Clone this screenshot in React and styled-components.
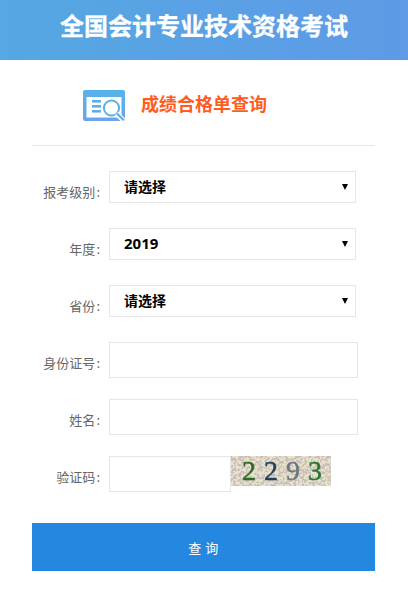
import React, { useState } from 'react';
import styled, { createGlobalStyle } from 'styled-components';

const GlobalStyle = createGlobalStyle`
  html, body {
    margin: 0;
    padding: 0;
    background: #fff;
    font-family: "Open Sans", "Noto Sans CJK SC", sans-serif;
  }
`;

const captchaDigits = [
  { value: '2', color: '#2a6a28' },
  { value: '2', color: '#1f3d5f' },
  { value: '9', color: '#6a777e' },
  { value: '3', color: '#23782f' },
];

function App() {
  const [code, setCode] = useState('');

  return (
    <Page>
      <GlobalStyle />
      <Header>全国会计专业技术资格考试</Header>
      <Main>
        <TitleRow>
          <QueryIcon />
          <TitleText>成绩合格单查询</TitleText>
        </TitleRow>
        <Form onSubmit={(e) => e.preventDefault()}>
          <SelectRow>
            <Label>报考级别</Label>
            <SelectWrap>
              <Select defaultValue="">
                <option value="">请选择</option>
                <option value="1">初级资格</option>
                <option value="2">中级资格</option>
              </Select>
            </SelectWrap>
          </SelectRow>
          <SelectRow>
            <Label>年度</Label>
            <SelectWrap>
              <Select defaultValue="2019" $size={15}>
                <option value="2019">2019</option>
                <option value="2018">2018</option>
              </Select>
            </SelectWrap>
          </SelectRow>
          <SelectRow>
            <Label>省份</Label>
            <SelectWrap>
              <Select defaultValue="">
                <option value="">请选择</option>
                <option value="bj">北京</option>
              </Select>
            </SelectWrap>
          </SelectRow>
          <InputRow>
            <Label>身份证号</Label>
            <Input />
          </InputRow>
          <InputRow>
            <Label>姓名</Label>
            <Input />
          </InputRow>
          <CaptchaRow>
            <Label>验证码</Label>
            <CaptchaInput value={code} onChange={(e) => setCode(e.target.value)} />
            <Captcha>
              <CaptchaNoise />
              {captchaDigits.map((d, i) => (
                <Digit key={i} $color={d.color}>{d.value}</Digit>
              ))}
            </Captcha>
          </CaptchaRow>
          <SubmitButton type="submit">查 询</SubmitButton>
        </Form>
      </Main>
    </Page>
  );
}

export default App;

function QueryIcon() {
  return (
    <IconSvg viewBox="0 0 42 32">
      <defs>
        <linearGradient id="iconFill" x1="0" y1="0" x2="0" y2="1">
          <stop offset="0" stopColor="#55b4ec" />
          <stop offset="1" stopColor="#6ba4ea" />
        </linearGradient>
      </defs>
      <rect x="0" y="0" width="42" height="31" rx="2" fill="url(#iconFill)" />
      <rect x="3.5" y="7" width="35" height="20.5" fill="#fff" />
      <rect x="9" y="10" width="9" height="2.6" fill="#5aaeea" />
      <rect x="9" y="15" width="9" height="2.6" fill="#5aaeea" />
      <rect x="9" y="20" width="9" height="2.6" fill="#5aaeea" />
      <circle cx="28.5" cy="18" r="7.6" fill="#fff" stroke="#5aaeea" strokeWidth="2" />
      <path d="M33.5 23.5 L40.5 30.5" stroke="#fff" strokeWidth="5" />
      <path d="M34 23.5 L40.5 30" stroke="#5aaeea" strokeWidth="2.2" />
    </IconSvg>
  );
}

function CaptchaNoise() {
  return (
    <NoiseSvg width="100" height="30">
      <filter id="captchaNoise">
        <feTurbulence type="fractalNoise" baseFrequency="0.38" numOctaves="3" seed="11" />
        <feColorMatrix
          type="matrix"
          values="0 0 0 0 0.58  0 0 0 0 0.50  0 0 0 0 0.50  6 0 0 0 -2.6"
        />
      </filter>
      <rect width="100" height="30" fill="#e9e4c8" />
      <rect width="100" height="30" filter="url(#captchaNoise)" />
    </NoiseSvg>
  );
}

const Page = styled.div`
  width: 408px;
  min-height: 593px;
  background: #fff;
`;

const Header = styled.h1`
  margin: 0;
  height: 60px;
  display: flex;
  align-items: center;
  justify-content: center;
  background: linear-gradient(90deg, #55a8e3, #5e9ae6);
  color: #fff;
  font-family: "Noto Sans CJK SC", sans-serif;
  font-size: 24px;
  font-weight: 700;
  -webkit-text-stroke: 0.3px #fff;
  padding-bottom: 11px;
  box-sizing: border-box;
`;

const Main = styled.main`
  margin: 0 33px 0 32px;
`;

const TitleRow = styled.div`
  height: 86px;
  box-sizing: border-box;
  display: flex;
  align-items: center;
  padding: 7px 0 0 51px;
  border-bottom: 1px solid #e6e6e6;
`;

const IconSvg = styled.svg`
  width: 42px;
  height: 32px;
  flex: none;
`;

const TitleText = styled.h2`
  margin: 0 0 7px 16px;
  color: #ff5c22;
  font-family: "Noto Sans CJK SC", sans-serif;
  font-size: 18px;
  font-weight: 700;
`;

const Form = styled.form`
  display: flex;
  flex-direction: column;
  padding-top: 25px;
`;

const Row = styled.div`
  display: flex;
  align-items: flex-start;
`;

const SelectRow = styled(Row)`
  height: 57px;
`;

const InputRow = styled(Row)`
  height: 57px;
`;

const CaptchaRow = styled(Row)`
  height: 67px;
`;

const Label = styled.label`
  width: 68px;
  margin-right: 9px;
  text-align: right;
  color: #666;
  font-family: "Noto Sans CJK SC", sans-serif;
  font-size: 13px;
  line-height: 20px;
  padding-top: 11px;
  white-space: nowrap;

  &::after {
    content: ":";
    margin-left: 1px;
  }
`;

const SelectWrap = styled.div`
  position: relative;
  width: 247px;
  height: 32px;

  &::after {
    content: "";
    position: absolute;
    top: 13px;
    right: 8px;
    border-left: 3px solid transparent;
    border-right: 3px solid transparent;
    border-top: 6px solid #000;
    pointer-events: none;
  }
`;

const Select = styled.select`
  display: block;
  width: 100%;
  height: 32px;
  box-sizing: border-box;
  padding: 0 0 2px 14px;
  background: #fff;
  border: 1px solid #e6e6e6;
  border-radius: 0;
  appearance: none;
  outline: none;
  color: #000;
  font-family: "Open Sans", "Noto Sans CJK SC", sans-serif;
  font-size: ${(p) => p.$size || 14}px;
  font-weight: 700;
`;

const Input = styled.input`
  width: 249px;
  height: 36px;
  box-sizing: border-box;
  background: #fff;
  border: 1px solid #e6e6e6;
  outline: none;
  padding: 0 10px;
`;

const CaptchaInput = styled(Input)`
  width: 122px;
`;

const Captcha = styled.div`
  position: relative;
  width: 100px;
  height: 30px;
  display: flex;
  align-items: center;
  justify-content: space-between;
  box-sizing: border-box;
  padding: 0 9px 0 11px;
  overflow: hidden;
`;

const NoiseSvg = styled.svg`
  position: absolute;
  inset: 0;
`;

const Digit = styled.span`
  position: relative;
  color: ${(p) => p.$color};
  font-family: "Liberation Serif", serif;
  font-size: 28px;
  font-weight: 400;
  -webkit-text-stroke: 0.5px ${(p) => p.$color};
  line-height: 30px;
  filter: blur(0.5px);
`;

const SubmitButton = styled.button`
  width: 343px;
  height: 48px;
  border: 0;
  background: #2488e0;
  color: #fff;
  font-family: "Noto Sans CJK SC", sans-serif;
  font-size: 13px;
  letter-spacing: 0.5px;
  cursor: pointer;
`;
